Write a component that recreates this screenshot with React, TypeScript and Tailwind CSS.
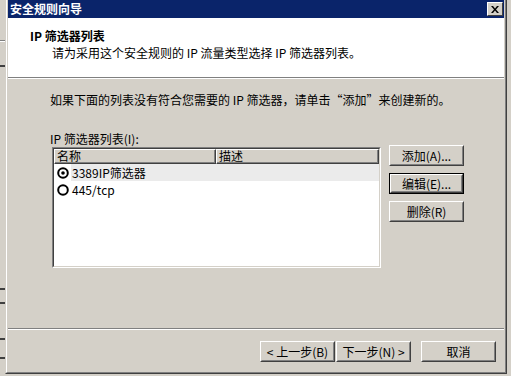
import React from "react";

const font = { fontFamily: '"Noto Sans CJK SC", "Liberation Sans", sans-serif' };

function Btn({ children, def = false, className = "" }: { children: React.ReactNode; def?: boolean; className?: string }) {
  const inner = (
    <div className="h-full w-full border border-t-white border-l-white border-r-[#404040] border-b-[#404040]">
      <div className="h-full w-full border border-t-[#d4d0c8] border-l-[#d4d0c8] border-r-[#808080] border-b-[#808080] flex items-center justify-center text-[12px] leading-none text-black">
        {children}
      </div>
    </div>
  );
  return (
    <div className={`h-[21px] w-[75px] ${def ? "border border-black" : ""} ${className}`}>{inner}</div>
  );
}

function Radio({ checked }: { checked: boolean }) {
  return (
    <svg width="12" height="12" viewBox="0 0 12 12" className="shrink-0">
      <circle cx="6" cy="6" r="4.8" fill="white" stroke="black" strokeWidth="2" />
      {checked && <circle cx="6" cy="6" r="1.8" fill="black" />}
    </svg>
  );
}

export default function App() {
  return (
    <div className="relative w-[511px] h-[376px] overflow-hidden bg-[#d4d0c8]" style={font}>
      {/* background window fragments */}
      <div className="absolute left-0 top-[40px] w-[5px] h-px bg-[#808080]" />
      <div className="absolute left-0 top-[41px] w-[5px] h-px bg-white" />
      <div className="absolute left-0 top-[65px] w-[5px] h-[2px] bg-[#404040]" />
      <div className="absolute left-0 top-[288px] w-[5px] h-[2px] bg-[#404040]" />
      <div className="absolute left-0 top-[302px] w-[5px] h-[2px] bg-[#404040]" />
      <div className="absolute left-0 top-[338px] w-[5px] h-[2px] bg-[#404040]" />
      <div className="absolute left-0 top-[357px] w-[5px] h-[2px] bg-[#404040]" />

      {/* dialog window */}
      <div className="absolute left-[5px] top-[-3px] w-[502px] h-[377px] border border-t-[#d4d0c8] border-l-[#d4d0c8] border-r-[#404040] border-b-[#404040]">
        <div className="h-full w-full border border-t-white border-l-white border-r-[#808080] border-b-[#808080] bg-[#d4d0c8] p-px flex flex-col">
          {/* title bar */}
          <div className="h-[18px] bg-[#0a246a] flex items-center justify-between shrink-0">
            <span className="pl-[2px] text-white font-bold text-[12px] leading-none">安全规则向导</span>
            <div className="mr-[1px] h-[14px] w-[16px] border border-t-white border-l-white border-r-[#404040] border-b-[#404040] bg-[#d4d0c8] flex items-center justify-center">
              <svg width="8" height="7" viewBox="0 0 8 7">
                <path d="M0 0h2l2 2.5L6 0h2L5 3.5 8 7H6L4 4.5 2 7H0l3-3.5z" fill="black" />
              </svg>
            </div>
          </div>
          {/* header */}
          <div className="h-[59px] bg-white shrink-0 pl-[22px] pt-[10px]">
            <div className="text-[12px] leading-[16px] font-bold text-black">IP 筛选器列表</div>
            <div className="pl-[22px] pt-[1px] text-[12px] leading-[16px] text-black">请为采用这个安全规则的 IP 流量类型选择 IP 筛选器列表。</div>
          </div>
          <div className="h-px bg-[#808080] shrink-0" />
          <div className="h-px bg-white shrink-0" />
          {/* body */}
          <div className="flex-1 flex flex-col">
            <div className="pl-[42px] pt-[13px] text-[12px] leading-[16px] text-black">如果下面的列表没有符合您需要的 IP 筛选器，请单击“添加”来创建新的。</div>
            <div className="pl-[42px] pt-[23px] text-[12px] leading-[16px] text-black">IP 筛选器列表(I):</div>
            <div className="flex pl-[44px] pt-[0px] gap-[8px]">
              {/* list */}
              <div className="w-[329px] h-[121px] border border-t-[#808080] border-l-[#808080] border-r-white border-b-white">
                <div className="h-full w-full border border-t-[#404040] border-l-[#404040] border-r-[#d4d0c8] border-b-[#d4d0c8] bg-white flex flex-col">
                  <div className="flex h-[15px] shrink-0">
                    <div className="w-[162px] h-full border border-t-white border-l-white border-r-[#404040] border-b-[#404040] bg-[#d4d0c8]">
                      <div className="h-full border-r border-b border-[#808080] pl-[2px] text-[12px] leading-[12px] text-black">名称</div>
                    </div>
                    <div className="flex-1 h-full border border-t-white border-l-white border-r-[#404040] border-b-[#404040] bg-[#d4d0c8]">
                      <div className="h-full border-r border-b border-[#808080] pl-[2px] text-[12px] leading-[12px] text-black">描述</div>
                    </div>
                  </div>
                  <div className="flex items-center h-[17px] pl-[3px] gap-[2px]">
                    <Radio checked />
                    <span className="flex-1 h-full bg-[#ebebeb] pl-[1px] text-[12px] leading-[17px] text-black">3389IP筛选器</span>
                  </div>
                  <div className="flex items-center h-[17px] pl-[3px] gap-[2px]">
                    <Radio checked={false} />
                    <span className="pl-[1px] text-[12px] leading-[17px] text-black">445/tcp</span>
                  </div>
                </div>
              </div>
              {/* buttons */}
              <div className="flex flex-col gap-[7px] -mt-[2px]">
                <Btn>添加(A)...</Btn>
                <Btn def>编辑(E)...</Btn>
                <Btn>删除(R)</Btn>
              </div>
            </div>
            <div className="flex-1" />
            <div className="h-px bg-[#808080]" />
            <div className="h-px bg-white" />
            <div className="flex justify-end pt-[11px] pb-[9px] pr-[8px]">
              <Btn>&lt; 上一步(B)</Btn>
              <Btn className="ml-px">下一步(N) &gt;</Btn>
              <Btn className="ml-[10px]">取消</Btn>
            </div>
          </div>
        </div>
      </div>
    </div>
  );
}
